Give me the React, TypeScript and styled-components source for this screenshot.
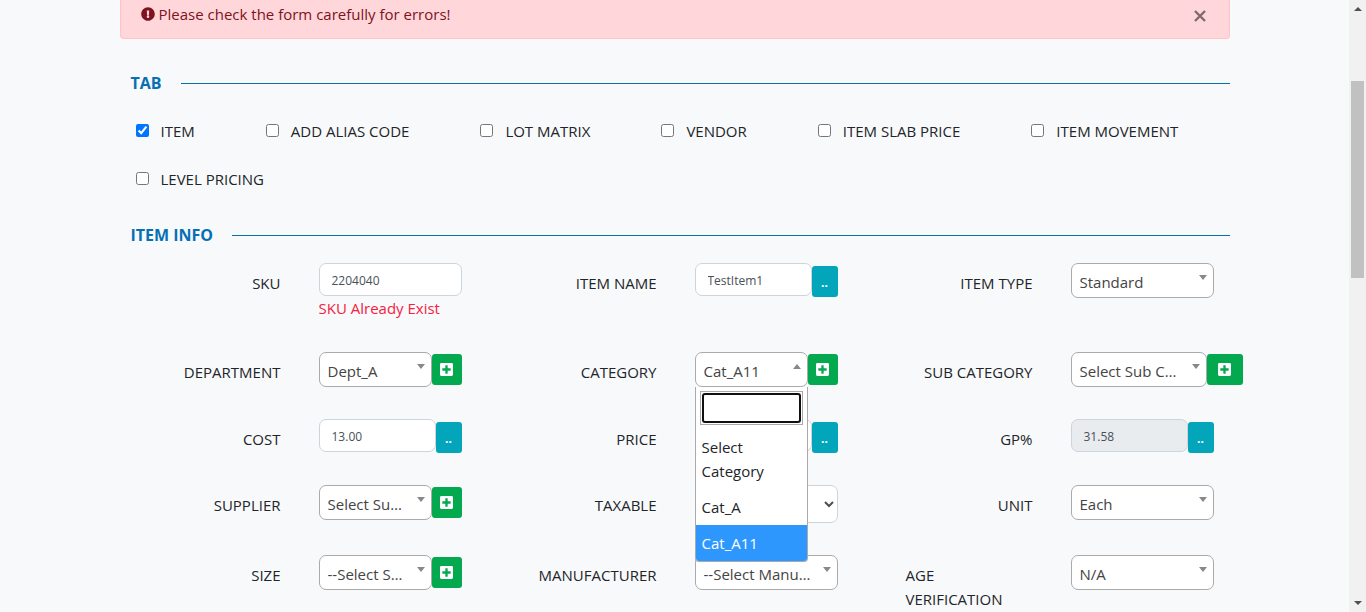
import React, { useState } from "react";
import styled, { createGlobalStyle, css } from "styled-components";

const GlobalStyle = createGlobalStyle`
  *, *::before, *::after { box-sizing: border-box; }
  body {
    margin: 0;
    background: #f8f9fb;
    color: #212529;
    font-family: "Open Sans", "Noto Sans", sans-serif;
    font-size: 15px;
    line-height: 24px;
  }
  input, select, button { font-family: inherit; }
`;

const Viewport = styled.div`
  display: flex;
  height: 100vh;
  overflow: hidden;
`;

const Page = styled.main`
  flex: 1;
  min-width: 0;
`;

const Container = styled.div`
  max-width: 1110px;
  margin: 0 auto;
`;

const Alert = styled.div`
  display: flex;
  align-items: center;
  gap: 4px;
  padding: 2px 20px 12px;
  border: 1px solid #ffc3c9;
  border-top: 0;
  border-radius: 0 0 4px 4px;
  background: #ffd6da;
  color: #7d1220;
`;

const AlertText = styled.span`
  flex: 1;
`;

const CloseButton = styled.button`
  width: 18px;
  height: 24px;
  padding: 4px 0 0;
  border: 0;
  background: none;
  color: #000;
  line-height: 0;
  opacity: 0.5;
`;

const SectionTitle = styled.h2`
  display: flex;
  align-items: center;
  gap: 19px;
  margin: 0;
  padding-left: 11px;
  color: #0670b5;
  font-size: 16px;
  font-weight: 700;
  line-height: 24px;

  &::after {
    content: "";
    flex: 1;
    height: 1px;
    background: #0b6fa8;
  }
`;

const Section = styled.section<{ $gap: number }>`
  padding-top: ${(p) => p.$gap}px;
`;

const TabList = styled.div`
  display: flex;
  flex-wrap: wrap;
  gap: 24px 71px;
  padding: 24px 0 0 16px;
`;

const TabOption = styled.label`
  display: flex;
  align-items: center;
  gap: 12px;
`;

const Checkbox = styled.input`
  width: 13px;
  height: 13px;
  margin: 0 0 2px;
  accent-color: #0075ff;
`;

const FieldGrid = styled.div`
  display: grid;
  grid-template-columns: repeat(3, minmax(0, 1fr));
  row-gap: 32px;
  margin: 0 -9px;
  padding-top: 16px;
`;

const Field = styled.div`
  display: grid;
  grid-template-columns: minmax(0, 1fr) 143px;
  column-gap: 38px;
  align-items: start;
  padding-right: 25px;
`;

const FieldLabel = styled.label`
  justify-self: end;
  max-width: 127px;
  padding-top: 8px;
`;

const Control = styled.div`
  display: flex;
  align-items: flex-start;
`;

const ErrorText = styled.div`
  color: #f5213f;
`;

const TextInput = styled.input`
  flex: 1;
  min-width: 0;
  height: 33px;
  padding: 2px 12px 0;
  border: 1px solid #ced4da;
  border-radius: 7px;
  background: #fff;
  color: #495057;
  font-size: 12px;

  &:read-only { background: #e9ecef; }
`;

const SelectBox = styled.div<{ $open?: boolean; $wide?: boolean }>`
  position: relative;
  ${(p) => (p.$wide ? css`flex: 0 0 136px;` : css`flex: 1; min-width: 0;`)}

  &::after {
    content: "";
    position: absolute;
    top: 12px;
    right: 7px;
    border: 4px solid transparent;
    pointer-events: none;
    ${(p) =>
      p.$open
        ? css`border-top: 0; border-bottom: 5px solid #888;`
        : css`border-bottom: 0; border-top: 5px solid #888;`}
  }
`;

const Select = styled.select`
  display: block;
  appearance: none;
  width: 100%;
  height: 35px;
  padding: 3px 26px 0 8px;
  border: 1px solid #aaa;
  border-radius: 7px;
  background: #fff;
  color: #444;
  font-size: 15px;
  text-overflow: ellipsis;
`;

const NativeSelect = styled.select`
  width: 100%;
  height: 38px;
  border: 1px solid #ced4da;
  border-radius: 7px;
  background: #fff;
  color: #495057;
  font-size: 15px;
`;

const AddButton = styled.button<{ $wide?: boolean }>`
  display: flex;
  align-items: center;
  justify-content: center;
  flex: 0 0 ${(p) => (p.$wide ? 36 : 30)}px;
  height: 31px;
  margin-top: 2px;
  padding: 0;
  border: 0;
  border-radius: 3px;
  background: #04a84e;
  color: #fff;
`;

const MoreButton = styled.button`
  flex: 0 0 26px;
  height: 31px;
  margin-top: 3px;
  padding: 2px 0 0;
  border: 0;
  border-radius: 3px;
  background: #03a5bb;
  color: #fff;
  font-size: 12px;
  font-weight: 700;
`;

const Menu = styled.div`
  position: absolute;
  z-index: 2;
  top: 100%;
  left: 0;
  right: 0;
  border: 1px solid #aaa;
  border-top: 0;
  border-radius: 0 0 4px 4px;
  background: #fff;
  overflow: hidden;
`;

const SearchFrame = styled.div`
  margin: 4px;
  padding: 1px;
  border: 1px solid #aaa;
`;

const SearchInput = styled.input`
  display: block;
  width: 100%;
  height: 30px;
  padding: 0 4px;
  border: 2px solid #101010;
  border-radius: 3px;
  outline: 0;
  font-size: 15px;
`;

const OptionList = styled.ul`
  margin: 0;
  padding: 0;
  list-style: none;
`;

const OptionItem = styled.li<{ $active: boolean }>`
  padding: 6px;
  background: ${(p) => (p.$active ? "#2e97fd" : "#fff")};
  color: ${(p) => (p.$active ? "#fff" : "#212529")};
`;

const ScrollTrack = styled.div`
  display: flex;
  flex-direction: column;
  align-items: center;
  flex: 0 0 17px;
  padding: 7px 0;
  background: #f1f1f1;
`;

const ScrollArrow = styled.span<{ $down?: boolean }>`
  border: 4px solid transparent;
  ${(p) =>
    p.$down
      ? css`border-bottom: 0; border-top-color: #505050; margin-top: auto;`
      : css`border-top: 0; border-bottom-color: #505050;`}
`;

const ScrollThumb = styled.span`
  width: 13px;
  height: 197px;
  margin-top: 70px;
  background: #c1c1c1;
`;

const AlertIcon = () => (
  <svg width="14" height="14" viewBox="0 0 512 512" fill="currentColor" aria-hidden="true">
    <path d="M504 256c0 137-111 248-248 248S8 393 8 256 119 8 256 8s248 111 248 248zM256 306c-25 0-46 21-46 46s21 46 46 46 46-21 46-46-21-46-46-46zm-44-165l8 136c0 6 6 11 12 11h48c6 0 12-5 12-11l8-136c0-7-5-13-12-13h-64c-7 0-12 6-12 13z" />
  </svg>
);

const PlusIcon = () => (
  <svg width="13" height="13" viewBox="0 0 448 448" fill="currentColor" aria-hidden="true">
    <path d="M400 0H48C21 0 0 21 0 48v352c0 27 21 48 48 48h352c27 0 48-21 48-48V48c0-27-21-48-48-48zm-32 252c0 7-5 12-12 12h-92v92c0 7-5 12-12 12h-56c-7 0-12-5-12-12v-92H92c-7 0-12-5-12-12v-56c0-7 5-12 12-12h92V92c0-7 5-12 12-12h56c7 0 12 5 12 12v92h92c7 0 12 5 12 12v56z" />
  </svg>
);

const CloseIcon = () => (
  <svg width="12" height="12" viewBox="0 0 12 12" stroke="currentColor" strokeWidth="2.4" aria-hidden="true">
    <path d="M1 1l10 10M11 1L1 11" />
  </svg>
);

type FieldSpec = {
  id: string;
  label: string;
  kind: "text" | "select" | "native";
  value: string;
  button?: "add" | "more";
  error?: string;
  readOnly?: boolean;
  wide?: boolean;
  options?: string[];
};

const tabs = [
  "ITEM",
  "ADD ALIAS CODE",
  "LOT MATRIX",
  "VENDOR",
  "ITEM SLAB PRICE",
  "ITEM MOVEMENT",
  "LEVEL PRICING",
];

const fields: FieldSpec[] = [
  { id: "sku", label: "SKU", kind: "text", value: "2204040", error: "SKU Already Exist" },
  { id: "item-name", label: "ITEM NAME", kind: "text", value: "TestItem1", button: "more" },
  { id: "item-type", label: "ITEM TYPE", kind: "select", value: "Standard" },
  { id: "department", label: "DEPARTMENT", kind: "select", value: "Dept_A", button: "add" },
  {
    id: "category",
    label: "CATEGORY",
    kind: "select",
    value: "Cat_A11",
    button: "add",
    options: ["Select Category", "Cat_A", "Cat_A11"],
  },
  { id: "sub-category", label: "SUB CATEGORY", kind: "select", value: "Select Sub Category", button: "add", wide: true },
  { id: "cost", label: "COST", kind: "text", value: "13.00", button: "more" },
  { id: "price", label: "PRICE", kind: "text", value: "", button: "more" },
  { id: "gp", label: "GP%", kind: "text", value: "31.58", button: "more", readOnly: true },
  { id: "supplier", label: "SUPPLIER", kind: "select", value: "Select Supplier", button: "add" },
  { id: "taxable", label: "TAXABLE", kind: "native", value: "" },
  { id: "unit", label: "UNIT", kind: "select", value: "Each" },
  { id: "size", label: "SIZE", kind: "select", value: "--Select Size--", button: "add" },
  { id: "manufacturer", label: "MANUFACTURER", kind: "select", value: "--Select Manufacturer--" },
  { id: "age", label: "AGE VERIFICATION", kind: "select", value: "N/A" },
];

function Dropdown({ field }: { field: FieldSpec }) {
  const [value, setValue] = useState(field.value);
  const [open, setOpen] = useState(Boolean(field.options));
  const options = field.options ?? [field.value];
  return (
    <SelectBox $open={open} $wide={field.wide}>
      <Select id={field.id} value={value} onChange={(e) => setValue(e.target.value)}>
        {options.map((o) => (
          <option key={o}>{o}</option>
        ))}
      </Select>
      {open && (
        <Menu>
          <SearchFrame>
            <SearchInput type="search" aria-label={`Search ${field.label}`} />
          </SearchFrame>
          <OptionList role="listbox" aria-label={field.label}>
            {options.map((o) => (
              <OptionItem
                key={o}
                role="option"
                aria-selected={o === value}
                $active={o === value}
                onClick={() => {
                  setValue(o);
                  setOpen(false);
                }}
              >
                {o}
              </OptionItem>
            ))}
          </OptionList>
        </Menu>
      )}
    </SelectBox>
  );
}

function FormField({ field }: { field: FieldSpec }) {
  return (
    <Field>
      <FieldLabel htmlFor={field.id}>{field.label}</FieldLabel>
      <div>
        <Control>
          {field.kind === "text" && (
            <TextInput id={field.id} type="text" defaultValue={field.value} readOnly={field.readOnly} />
          )}
          {field.kind === "select" && <Dropdown field={field} />}
          {field.kind === "native" && (
            <NativeSelect id={field.id}>
              <option>{field.value}</option>
            </NativeSelect>
          )}
          {field.button === "add" && (
            <AddButton type="button" $wide={field.wide} aria-label={`Add ${field.label}`}>
              <PlusIcon />
            </AddButton>
          )}
          {field.button === "more" && <MoreButton type="button">..</MoreButton>}
        </Control>
        {field.error && <ErrorText>{field.error}</ErrorText>}
      </div>
    </Field>
  );
}

export default function App() {
  return (
    <Viewport>
      <GlobalStyle />
      <Page>
        <Container>
          <Alert role="alert">
            <AlertIcon />
            <AlertText>Please check the form carefully for errors!</AlertText>
            <CloseButton type="button" aria-label="Close">
              <CloseIcon />
            </CloseButton>
          </Alert>
          <Section $gap={32}>
            <SectionTitle>TAB</SectionTitle>
            <TabList>
              {tabs.map((t, i) => (
                <TabOption key={t}>
                  <Checkbox type="checkbox" defaultChecked={i === 0} />
                  {t}
                </TabOption>
              ))}
            </TabList>
          </Section>
          <Section $gap={32}>
            <SectionTitle>ITEM INFO</SectionTitle>
            <FieldGrid>
              {fields.map((f) => (
                <FormField key={f.id} field={f} />
              ))}
            </FieldGrid>
          </Section>
        </Container>
      </Page>
      <ScrollTrack aria-hidden="true">
        <ScrollArrow />
        <ScrollThumb />
        <ScrollArrow $down />
      </ScrollTrack>
    </Viewport>
  );
}
